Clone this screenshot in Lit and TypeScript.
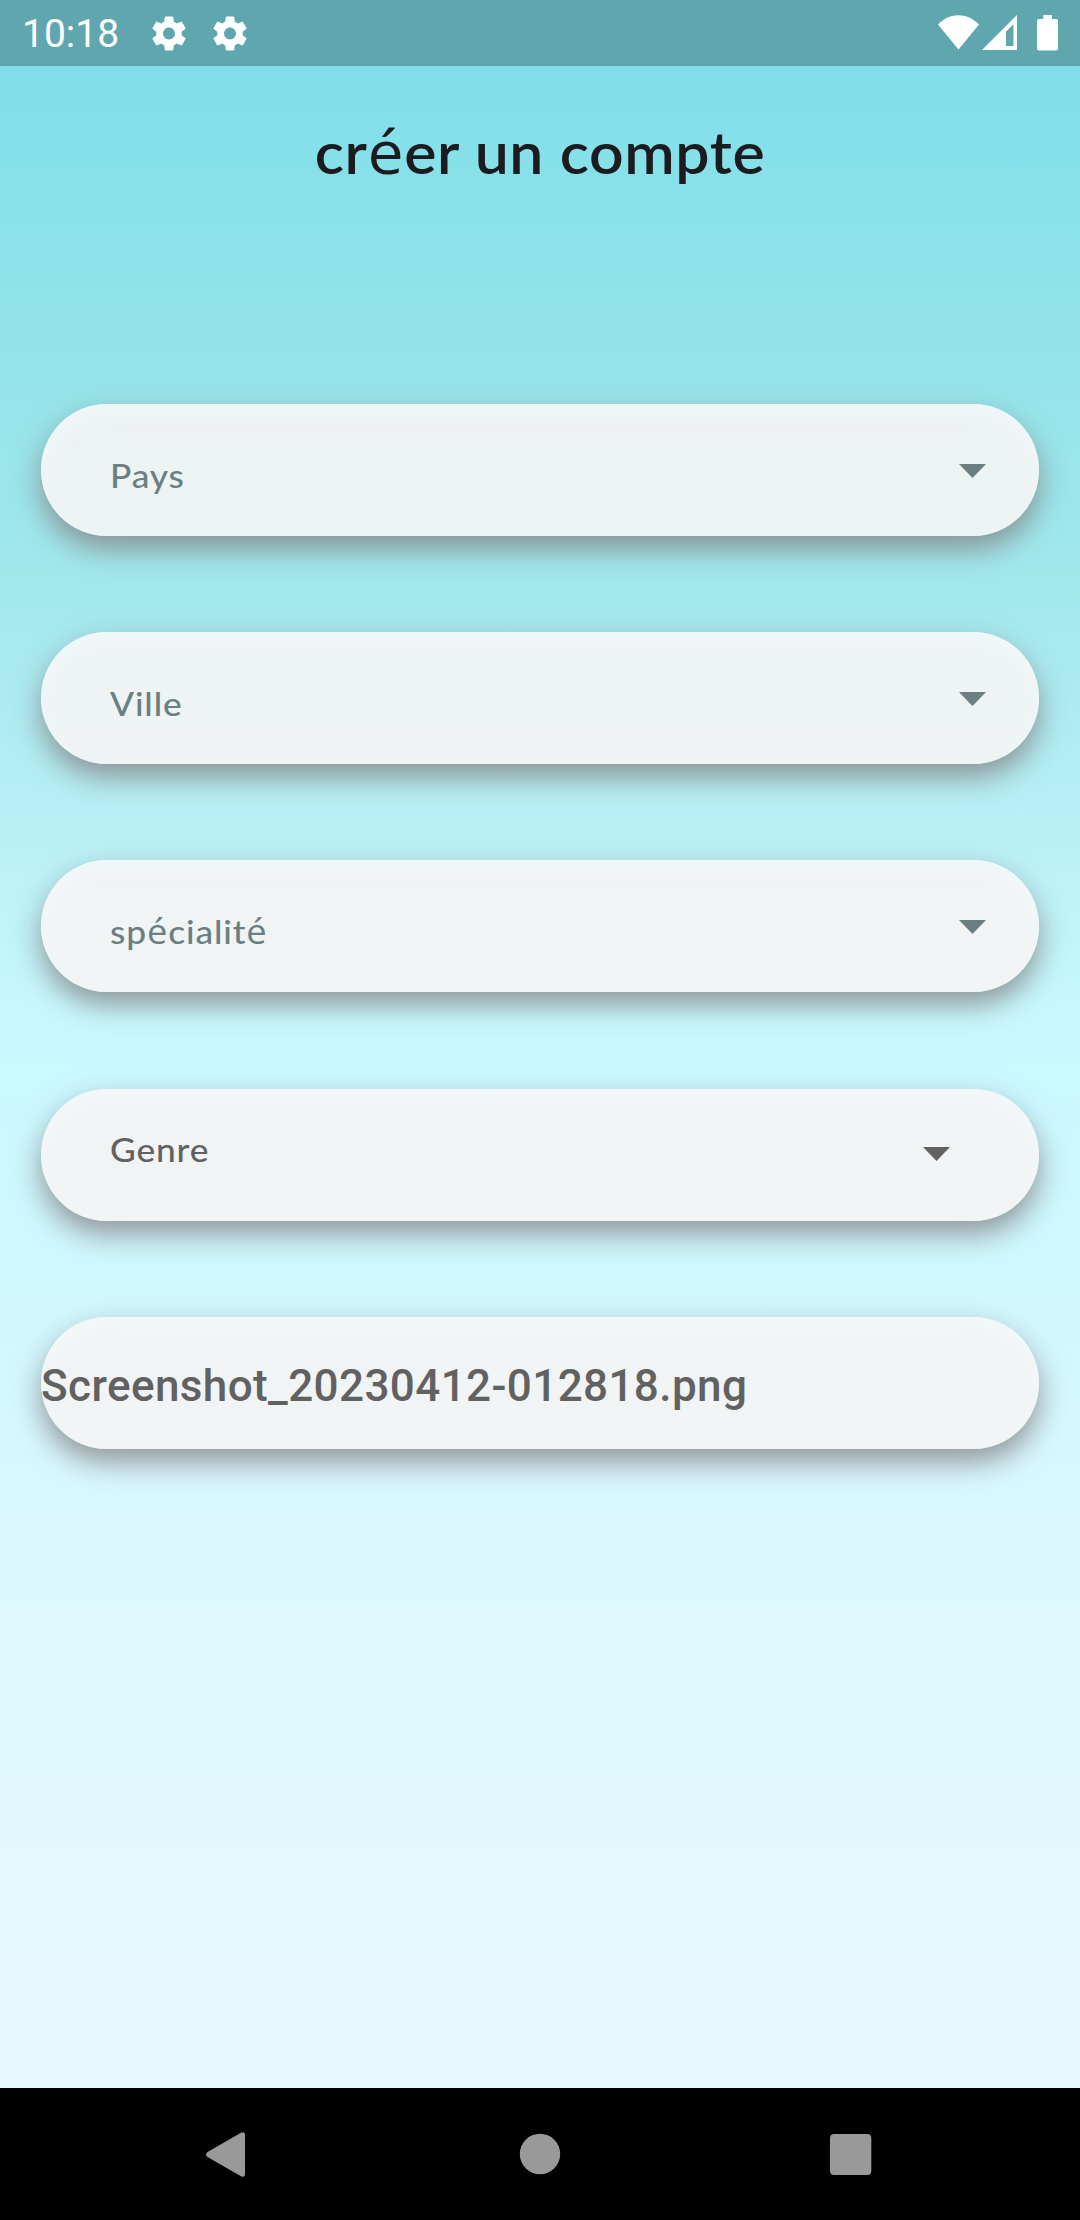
import { LitElement, html, css } from "lit";
import { customElement, property } from "lit/decorators.js";

const gear = html`<svg class="gear" viewBox="2 2 20 20">
  <path fill="#fff" d="M19.43 12.98c.04-.32.07-.64.07-.98s-.03-.66-.07-.98l2.11-1.65c.19-.15.24-.42.12-.64l-2-3.46c-.12-.22-.39-.3-.61-.22l-2.49 1c-.52-.4-1.08-.73-1.69-.98l-.38-2.65C14.46 2.18 14.25 2 14 2h-4c-.25 0-.46.18-.49.42l-.38 2.65c-.61.25-1.17.59-1.69.98l-2.49-1c-.23-.09-.49 0-.61.22l-2 3.46c-.13.22-.07.49.12.64l2.11 1.65c-.04.32-.07.65-.07.98s.03.66.07.98l-2.11 1.65c-.19.15-.24.42-.12.64l2 3.46c.12.22.39.3.61.22l2.49-1c.52.4 1.08.73 1.69.98l.38 2.65c.03.24.24.42.49.42h4c.25 0 .46-.18.49-.42l.38-2.65c.61-.25 1.17-.59 1.69-.98l2.49 1c.23.09.49 0 .61-.22l2-3.46c.12-.22.07-.49-.12-.64l-2.11-1.65zM12 15.5c-1.93 0-3.5-1.57-3.5-3.5s1.57-3.5 3.5-3.5 3.5 1.57 3.5 3.5-1.57 3.5-3.5 3.5z"/>
</svg>`;

/** Wraps accented letters so they can use the secondary typeface. */
const accented = (text: string) =>
  text.split(/(é)/).map((part) => (part === "é" ? html`<span class="accent">é</span>` : part));

@customElement("status-bar")
class StatusBar extends LitElement {
  static styles = css`
    :host { display: flex; height: 66px; background: #5fa6ae; color: #fff; justify-content: space-between; }
    .left { display: flex; align-items: center; padding-left: 22px; }
    .time { font: 400 39px/66px Roboto, sans-serif; width: 130px; padding-top: 2px; white-space: nowrap; }
    .gear { width: 34px; height: 35px; margin-right: 27px; }
    .right { display: block; width: 180px; height: 66px; }
  `;
  render() {
    return html`
      <div class="left"><span class="time">10:18</span>${gear}${gear}</div>
      <svg class="right" viewBox="0 0 180 66" fill="#fff">
        <path d="M38 24.5C50 12.3 67 12.3 79 24.5L58.500 49.500Z"/>
        <path fill-rule="evenodd" d="M82 50L117 15V50ZM106 46H113.500V24.300L106 31.500Z"/>
        <path d="M143.300 15H152V19H156Q158 19 158 21V48.500Q158 50.500 156 50.500H139Q137 50.500 137 48.500V21Q137 19 139 19H143.300Z"/>
      </svg>`;
  }
}

@customElement("form-field")
class FormField extends LitElement {
  @property() label = "";
  @property({ reflect: true }) kind = "select";
  static styles = css`
    :host {
      display: flex; box-sizing: border-box; height: 132px; border-radius: 66px;
      align-items: center; justify-content: space-between;
      padding: 0 53px 0 69px; color: #6b7f82;
      background: rgba(243, 243, 243, 0.93);
      box-shadow: 0 13px 29px rgba(132, 132, 132, 0.84), inset 0 8px 22px rgba(245, 252, 255, 0.65);
    }
    :host([kind="gender"]) { color: #616161; padding-right: 89px; }
    :host([kind="file"]) { color: #616161; padding: 0; }
    .label {
      font: 500 33px/40px Lato, sans-serif; letter-spacing: 0.8px; padding-top: 9px; white-space: nowrap;
      transform: scaleX(1.07); transform-origin: left;
    }
    :host([kind="gender"]) .label { padding: 0 0 12px; }
    :host([kind="file"]) .label { font: 500 44px/52px Roboto, sans-serif; padding: 6px 0 0; letter-spacing: 0.4px; transform: none; }
    .accent { font-family: "Open Sans", sans-serif; font-weight: 400; font-size: 1.03em; line-height: 0; }
    .arrow { width: 27px; height: 14px; fill: currentColor; padding-top: 2px; }
    :host([kind="gender"]) .arrow { padding: 0 0 1px; }
  `;
  render() {
    return html`
      <span class="label">${accented(this.label)}</span>
      ${this.kind === "file" ? "" : html`<svg class="arrow" viewBox="0 0 27 14"><path d="M0 0H27L13.500 14Z"/></svg>`}
    `;
  }
}

@customElement("nav-bar")
class NavBar extends LitElement {
  static styles = css`
    :host { display: block; height: 132px; background: #000; }
    svg { display: block; }
  `;
  render() {
    return html`<svg width="1080" height="132" viewBox="0 0 1080 132" fill="#999">
      <path d="M207.500 64L241 44.800Q245 43 245 47V86Q245 90 241 88.200L207.500 69Q204.500 66.500 207.500 64Z"/>
      <circle cx="540" cy="66" r="20.200"/>
      <rect x="830" y="46" width="41.300" height="41" rx="4"/>
    </svg>`;
  }
}

@customElement("app-root")
class AppRoot extends LitElement {
  static styles = css`
    :host { display: flex; flex-direction: column; width: 1080px; height: 2220px; overflow: hidden; }
    .page {
      flex: 1; display: flex; flex-direction: column;
      background: linear-gradient(#80deea 0, #8ae2e9 150px, #96e5ea 350px, #a2e8ed 520px, #b9f0f6 770px, #c8f9ff 960px, #d1f7ff 1220px, #dcf8ff 1500px, #e8f8ff 2022px);
    }
    .title {
      margin: 50px 0 0; height: 72px; text-align: center; white-space: nowrap;
      font: 600 57px/72px Lato, sans-serif; letter-spacing: 0.6px; color: #1c1b1f;
      transform: scaleX(1.065);
    }
    .accent { font-family: "Open Sans", sans-serif; font-weight: 400; font-size: 1.06em; line-height: 0; }
    .form { display: flex; flex-direction: column; gap: 96.200px; padding: 216px 41px 0; }
  `;
  render() {
    return html`
      <status-bar></status-bar>
      <main class="page">
        <h1 class="title">${accented("créer un compte")}</h1>
        <div class="form">
          <form-field label="Pays"></form-field>
          <form-field label="Ville"></form-field>
          <form-field label="spécialité"></form-field>
          <form-field label="Genre" kind="gender"></form-field>
          <form-field label="Screenshot_20230412-012818.png" kind="file"></form-field>
        </div>
      </main>
      <nav-bar></nav-bar>`;
  }
}
